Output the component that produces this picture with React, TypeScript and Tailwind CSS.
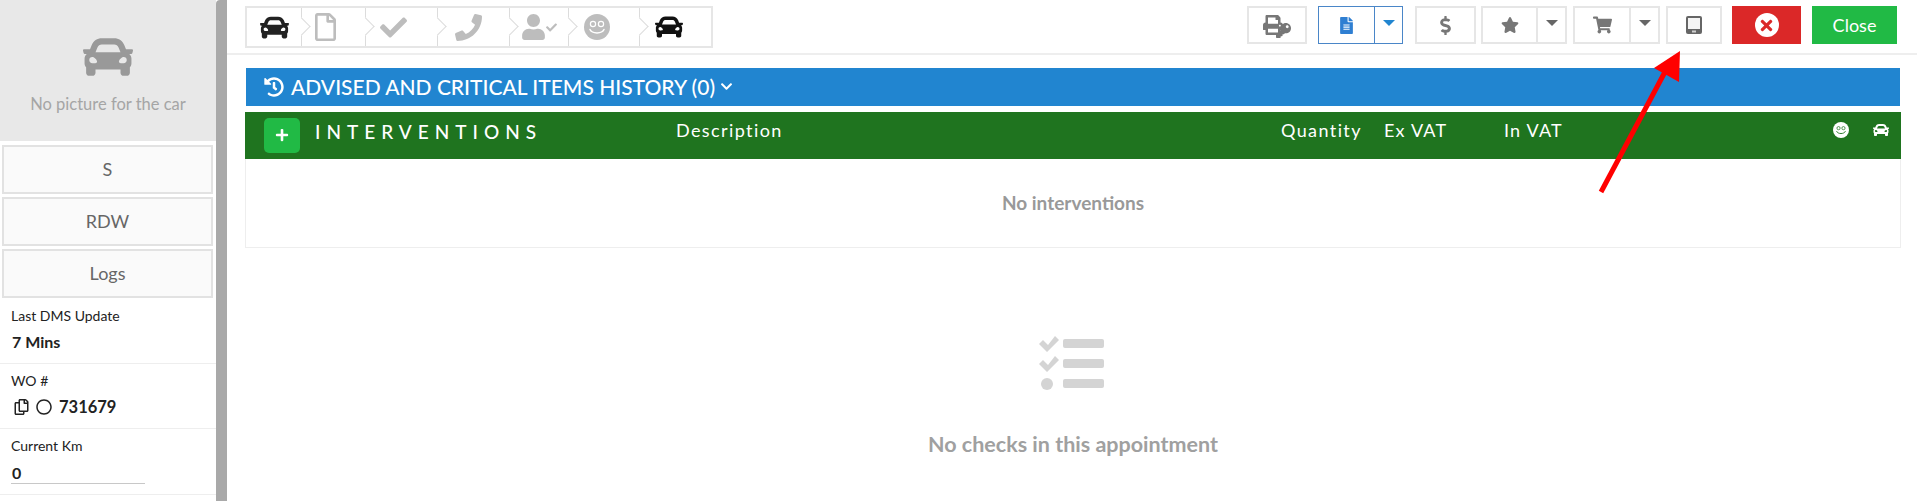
import {
  FaCar,
  FaCheck,
  FaChevronDown,
  FaDollarSign,
  FaFileAlt,
  FaHistory,
  FaKey,
  FaPhone,
  FaPlus,
  FaPrint,
  FaRegCircle,
  FaRegCopy,
  FaRegFile,
  FaShoppingCart,
  FaStar,
  FaTimes,
  FaUser,
} from "react-icons/fa";

function Smile({ className, eye }: { className: string; eye: string }) {
  return (
    <svg viewBox="0 0 26 26" className={className}>
      <circle cx="13" cy="13" r="13" fill="currentColor" />
      <circle cx="9" cy="10" r="2.6" fill="none" stroke={eye} strokeWidth="1.2" />
      <circle cx="17" cy="10" r="2.6" fill="none" stroke={eye} strokeWidth="1.2" />
      <path d="M6 15.5c2 4.5 12 4.5 14 0" fill="none" stroke={eye} strokeWidth="1.5" strokeLinecap="round" />
    </svg>
  );
}

function Tablet() {
  return (
    <svg viewBox="0 0 16 18" className="h-[18px] w-[16px]">
      <rect width="16" height="18" rx="2" fill="#666666" />
      <rect x="2" y="2" width="12" height="11" fill="#f4f4f4" />
      <rect x="6" y="14.5" width="4" height="2" fill="#cfcfcf" />
    </svg>
  );
}

function Step({ width, children, first }: { width: string; children: React.ReactNode; first?: boolean }) {
  return (
    <div className={`relative flex h-full items-center justify-center ${width}`}>
      {!first && <span className="absolute bottom-0 left-[-1px] top-0 w-px bg-[#dcdcdc]" />}
      {!first && (
        <span className="absolute left-[-7px] top-[12px] h-[13px] w-[13px] rotate-45 border-r border-t border-[#dcdcdc] bg-white" />
      )}
      <span className="relative flex items-center">{children}</span>
    </div>
  );
}

function ToolButton({ width, children }: { width: string; children: React.ReactNode }) {
  return <div className={`flex h-[38px] items-center justify-center border-2 border-[#e6e6e6] bg-white ${width}`}>{children}</div>;
}

function SplitButton({ mainWidth, children }: { mainWidth: string; children: React.ReactNode }) {
  return (
    <div className="flex h-[38px] items-stretch border-2 border-[#e6e6e6] bg-white">
      <div className={`flex items-center justify-center border-r-2 border-[#e6e6e6] ${mainWidth}`}>{children}</div>
      <div className="flex w-[27px] items-center justify-center pb-[4px]">
        <span className="h-0 w-0 border-x-[6px] border-t-[6px] border-x-transparent border-t-[#666666]" />
      </div>
    </div>
  );
}

function SideButton({ label }: { label: string }) {
  return (
    <div className="mx-[2px] flex h-[49px] w-[211px] items-center justify-center border-2 border-[#e2e2e2] bg-[#fafafa] text-[18px] text-[#666666]">
      {label}
    </div>
  );
}

function ChecksIcon() {
  return (
    <svg viewBox="0 0 65 55" className="-ml-[3px] h-[55px] w-[65px] text-[#d4d4d4]" fill="currentColor">
      <path d="M0 9l4-4 5 5L16 1l4 4L8 17z" />
      <path d="M0 29l4-4 5 5L16 21l4 4L8 37z" />
      <circle cx="8" cy="49" r="6" />
      <rect x="24" y="4" width="41" height="9" rx="2" />
      <rect x="24" y="24" width="41" height="9" rx="2" />
      <rect x="24" y="44" width="41" height="9" rx="2" />
    </svg>
  );
}

export default function App() {
  return (
    <div className="relative isolate flex h-[501px] w-[1917px] overflow-hidden bg-white font-['Lato','Noto_Sans',sans-serif] text-[#222222]">
      {/* Left column */}
      <aside className="flex w-[216px] shrink-0 flex-col">
        <div className="flex h-[141px] flex-col items-center bg-[#e8e8e8] pt-[32px]">
          <FaCar className="h-[50px] w-[50px] text-[#999999]" />
          <div className="mt-[10px] text-[16.5px] text-[#a5a5a5]">No picture for the car</div>
        </div>
        <div className="flex h-[158px] flex-col gap-[3px] pt-[4px]">
          <SideButton label="S" />
          <SideButton label="RDW" />
          <SideButton label="Logs" />
        </div>
        <div className="h-[65px] border-b border-[#eeeeee] pl-[11px] pt-[8px]">
          <div className="text-[14px] leading-[18px]">Last DMS Update</div>
          <div className="mt-[7px] pl-[1px] text-[16px] font-bold leading-[20px]">7 Mins</div>
        </div>
        <div className="h-[65px] border-b border-[#eeeeee] pl-[11px] pt-[8px]">
          <div className="text-[14px] leading-[18px]">WO #</div>
          <div className="mt-[7px] flex items-center text-[16.5px] font-bold leading-[20px]">
            <FaRegCopy className="ml-[3px] h-[16px] w-[15px]" />
            <FaRegCircle className="ml-[7px] h-[16px] w-[16px]" />
            <span className="ml-[7px]">731679</span>
          </div>
        </div>
        <div className="h-[66px] border-b border-[#eeeeee] pl-[11px] pt-[8px]">
          <div className="text-[14px] leading-[18px]">Current Km</div>
          <div className="mt-[7px] w-[134px] border-b border-[#c8c8c8] pl-[1px] text-[16px] font-bold leading-[21px]">0</div>
        </div>
      </aside>

      <div className="w-[11px] shrink-0 rounded-tl-[4px] bg-[#a9a9a9]" />

      {/* Main */}
      <main className="flex min-w-0 flex-1 flex-col">
        <header className="flex h-[55px] shrink-0 items-start border-b-2 border-[#eeeeee] pl-[18px] pr-[20px] pt-[6px]">
          <div className="flex h-[42px] w-[468px] items-stretch border-2 border-[#e6e6e6]">
            <Step first width="w-[55px]">
              <FaCar className="h-[29px] w-[29px] text-[#222222]" />
            </Step>
            <Step width="w-[64px]">
              <span className="-ml-[17px]">
                <FaRegFile className="h-[28px] w-[21px] text-[#bdbdbd]" />
              </span>
            </Step>
            <Step width="w-[72px]">
              <span className="-ml-[17px]">
                <FaCheck className="h-[27px] w-[27px] text-[#bdbdbd]" />
              </span>
            </Step>
            <Step width="w-[72px]">
              <span className="-ml-[12px]">
                <FaPhone className="h-[27px] w-[27px] text-[#bdbdbd]" />
              </span>
            </Step>
            <Step width="w-[59px]">
              <FaUser className="h-[26px] w-[23px] text-[#bdbdbd]" />
              <FaCheck className="ml-[1px] h-[11px] w-[11px] text-[#bdbdbd]" />
            </Step>
            <Step width="w-[71px]">
              <span className="-ml-[16px]">
                <Smile className="h-[26px] w-[26px] text-[#bdbdbd]" eye="#ffffff" />
              </span>
            </Step>
            <Step width="w-[71px]">
              <span className="-ml-[14px]">
                <FaCar className="h-[28px] w-[28px] text-[#111111]" />
              </span>
            </Step>
          </div>

          <div className="ml-auto flex items-start">
            <ToolButton width="w-[60px]">
              <span className="relative flex h-[26px] w-[28px] items-center">
                <FaPrint className="h-[22px] w-[20px] text-[#777777]" />
                <FaKey className="absolute bottom-0 right-0 h-[15px] w-[15px] text-[#777777]" />
              </span>
            </ToolButton>
            <div className="ml-[11px] flex h-[38px] items-stretch border border-[#4a86c8] bg-white">
              <div className="flex w-[56px] items-center justify-center border-r border-[#4a86c8]">
                <FaFileAlt className="h-[17px] w-[13px] text-[#2f7fd2]" />
              </div>
              <div className="flex w-[27px] items-center justify-center pb-[4px]">
                <span className="h-0 w-0 border-x-[6px] border-t-[6px] border-x-transparent border-t-[#2185d0]" />
              </div>
            </div>
            <div className="ml-[12px]">
              <ToolButton width="w-[61px]">
                <FaDollarSign className="h-[19px] w-[11px] text-[#777777]" />
              </ToolButton>
            </div>
            <div className="ml-[5px]">
              <SplitButton mainWidth="w-[55px]">
                <FaStar className="h-[18px] w-[18px] text-[#777777]" />
              </SplitButton>
            </div>
            <div className="ml-[6px]">
              <SplitButton mainWidth="w-[56px]">
                <FaShoppingCart className="h-[18px] w-[19px] text-[#777777]" />
              </SplitButton>
            </div>
            <div className="ml-[6px]">
              <ToolButton width="w-[56px]">
                <Tablet />
              </ToolButton>
            </div>
            <div className="ml-[10px] flex h-[38px] w-[69px] items-center justify-center bg-[#db2828]">
              <span className="flex h-[24px] w-[24px] items-center justify-center rounded-full bg-white">
                <FaTimes className="h-[17px] w-[13px] text-[#db2828]" />
              </span>
            </div>
            <div className="ml-[11px] flex h-[38px] w-[85px] items-center justify-center bg-[#21ba45] text-[18px] text-white">
              Close
            </div>
          </div>
        </header>

        <div className="flex flex-col pl-[18px] pr-[16px] pt-[13px]">
          <div className="ml-[1px] mr-[1px] flex h-[38px] items-center bg-[#2185d0] pb-[1px] pl-[18px] text-white">
            <FaHistory className="h-[20px] w-[20px]" />
            <span className="ml-[7px] text-[21px] font-medium leading-none">ADVISED AND CRITICAL ITEMS HISTORY (0)</span>
            <FaChevronDown className="ml-[5px] h-[13px] w-[13px]" />
          </div>
          <div className="mt-[6px] flex h-[47px] items-start bg-[#1f741f] text-white">
            <div className="ml-[19px] mt-[6px] flex h-[35px] w-[36px] items-center justify-center rounded-[5px] bg-[#21ba45] pb-[2px]">
              <FaPlus className="h-[14px] w-[14px]" />
            </div>
            <div className="ml-[15px] mt-[8px] w-[361px] text-[19px] font-medium leading-[24px] tracking-[6px]">
              INTERVENTIONS
            </div>
            <div className="mt-[6px] w-[605px] text-[18px] leading-[24px] tracking-[1.4px]">Description</div>
            <div className="mt-[6px] w-[103px] text-[18px] leading-[24px] tracking-[1.4px]">Quantity</div>
            <div className="mt-[6px] w-[120px] text-[18px] leading-[24px] tracking-[1.2px]">Ex VAT</div>
            <div className="mt-[6px] w-[329px] text-[18px] leading-[24px] tracking-[1.2px]">In VAT</div>
            <Smile className="mt-[10px] h-[16px] w-[16px] text-white" eye="#1f741f" />
            <FaCar className="ml-[24px] mt-[10px] h-[16px] w-[16px]" />
          </div>
          <div className="flex h-[89px] items-center justify-center border-x border-b border-[#eeeeee] text-[19px] font-bold text-[#999999]">
            No interventions
          </div>
          <div className="flex flex-col items-center pt-[87px]">
            <ChecksIcon />
            <div className="mt-[41px] text-[21.5px] font-bold leading-[26px] text-[#a0a0a0]">No checks in this appointment</div>
          </div>
        </div>
      </main>

      {/* Annotation arrow */}
      <svg className="pointer-events-none absolute left-[1590px] top-[40px] h-[165px] w-[100px]" viewBox="0 0 100 165">
        <line x1="11" y1="152" x2="76" y2="30" stroke="#ff0000" strokeWidth="5" />
        <polygon points="90,11 64,28 89,42" fill="#ff0000" />
      </svg>
    </div>
  );
}
